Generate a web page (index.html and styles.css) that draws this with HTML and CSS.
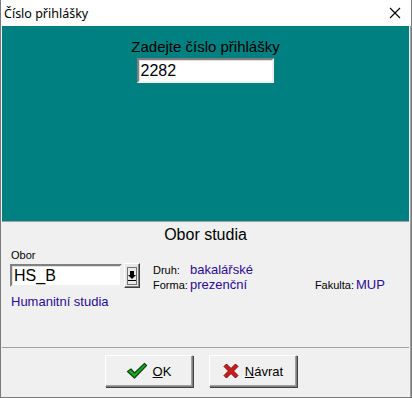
FILE: index.html
```html
<!DOCTYPE html>
<html lang="cs">

<head>
    <meta charset="UTF-8">
    <title>Číslo přihlášky</title>
    <link rel="stylesheet" href="styles.css">
</head>

<body>
    <div class="window">
        <div class="titlebar">
            <span class="title">Číslo přihlášky</span>
            <svg class="close" width="12" height="12" viewBox="0 0 12 12">
                <path d="M1 1 L11 11 M11 1 L1 11" stroke="#000" stroke-width="1.1" fill="none" />
            </svg>
        </div>

        <div class="client">
            <div class="entry">
                <div class="entry-label">Zadejte číslo přihlášky</div>
                <div class="sunken entry-input">2282</div>
            </div>

            <div class="study">
                <div class="study-title">Obor studia</div>
                <div class="study-row">
                    <div class="field">
                        <div class="small-label">Obor</div>
                        <div class="combo">
                            <div class="sunken obor-input">HS_B</div>
                            <div class="pick">
                                <svg width="12" height="20" viewBox="0 0 12 20">
                                    <rect x="1.5" y="1.5" width="9" height="17" fill="none" stroke="#000" stroke-dasharray="1 1" />
                                    <path d="M4 5 H8 V9 H10 L6 13 L2 9 H4 Z" fill="#000" />
                                    <path d="M2 14.5 H10" stroke="#000" />
                                </svg>
                            </div>
                        </div>
                        <div class="value name">Humanitní studia</div>
                    </div>
                    <div class="facts">
                        <div class="fact"><span class="key">Druh:</span><span class="value">bakalářské</span></div>
                        <div class="fact"><span class="key">Forma:</span><span class="value">prezenční</span></div>
                    </div>
                    <div class="fact faculty"><span class="key">Fakulta:</span><span class="value">MUP</span></div>
                </div>
            </div>

            <div class="buttons">
                <button class="btn">
                    <svg width="22" height="18" viewBox="0 0 22 18">
                        <path d="M1.5 9.5 L5 7 L8.5 11 L18.5 1.5 L20.5 3.5 L8.5 16 Z" fill="#22a62a" stroke="#0b4a12" stroke-width="1.2" stroke-linejoin="round" />
                    </svg>
                    <span><u>O</u>K</span>
                </button>
                <button class="btn">
                    <svg width="18" height="18" viewBox="0 0 18 18">
                        <path d="M2 4.5 L4.5 2 L9 6.5 L13.5 2 L16 4.5 L11.5 9 L16 13.5 L13.5 16 L9 11.5 L4.5 16 L2 13.5 L6.5 9 Z" fill="#d0191b" stroke="#7a0d0e" stroke-width="1" stroke-linejoin="round" />
                    </svg>
                    <span><u>N</u>ávrat</span>
                </button>
            </div>
        </div>
    </div>
</body>

</html>
```

FILE: styles.css
```css
body {
    margin: 0;
    padding: 0;
    font-family: 'Liberation Sans', Arial, sans-serif;
    background: #f0f0f0;
}

.window {
    width: 412px;
    height: 398px;
    box-sizing: border-box;
    border: 1px solid #7a7a7a;
    border-top: 0;
    display: flex;
    flex-direction: column;
    background: #f0f0f0;
}

.titlebar {
    height: 26px;
    background: white;
    display: flex;
    align-items: center;
    justify-content: space-between;
    padding: 0 10px 0 3px;
    flex-shrink: 0;
}

.title {
    font-family: 'Noto Sans', sans-serif;
    font-size: 12.5px;
    color: #000;
}

.client {
    flex: 1;
    display: flex;
    flex-direction: column;
    padding: 0 1px 0 1px;
    border-right: 1px solid #a0a0a0;
}

.entry {
    height: 195px;
    background: #008080;
    display: flex;
    flex-direction: column;
    align-items: center;
    padding-top: 11px;
    box-sizing: border-box;
    flex-shrink: 0;
}

.entry-label {
    font-size: 15px;
    color: #000;
    line-height: 20px;
}

.sunken {
    background: white;
    border: 2px solid;
    border-color: #808080 #f0f0f0 #f0f0f0 #808080;
    box-shadow: inset 1px 1px 0 #e0e0e0;
    box-sizing: border-box;
    color: #000;
}

.entry-input {
    width: 137px;
    height: 25px;
    font-size: 16px;
    line-height: 21px;
    padding-left: 2px;
    margin-left: -1px;
    margin-top: 1px;
}

.study {
    border-top: 1px solid #a0a0a0;
    padding: 3px 8px 0 8px;
    height: 126px;
    box-sizing: border-box;
    flex-shrink: 0;
}

.study-title {
    text-align: center;
    font-size: 16px;
    line-height: 20px;
    color: #000;
}

.study-row {
    display: flex;
    align-items: flex-start;
    margin-top: 4px;
}

.small-label {
    font-size: 11px;
    line-height: 13px;
    color: #000;
    margin-left: 1px;
}

.combo {
    display: flex;
    align-items: center;
    gap: 2px;
    margin-top: 1px;
}

.obor-input {
    width: 112px;
    height: 23px;
    font-size: 16px;
    line-height: 19px;
    padding-left: 2px;
}

.pick {
    width: 16px;
    height: 25px;
    box-sizing: border-box;
    border: 1px solid;
    border-color: #fff #404040 #404040 #fff;
    box-shadow: inset -1px -1px 0 #808080;
    background: #e8e8e8;
    display: flex;
    align-items: center;
    justify-content: center;
}

.value {
    color: #2c0a96;
}

.name {
    font-size: 13px;
    margin-top: 6px;
    margin-left: 1px;
}

.facts {
    margin-left: 13px;
    margin-top: 13px;
}

.fact {
    font-size: 11px;
    height: 15px;
    line-height: 15px;
    display: flex;
    align-items: baseline;
}

.fact .key {
    width: 37px;
    color: #000;
}

.fact .value {
    font-size: 13px;
    line-height: 15px;
}

.faculty {
    margin-left: 62px;
    margin-top: 28px;
}

.faculty .key {
    width: auto;
    margin-right: 2px;
}

.buttons {
    border-top: 1px solid #a0a0a0;
    flex: 1;
    display: flex;
    justify-content: center;
    gap: 16px;
    padding: 7px 10px 0 0;
}

.btn {
    width: 88px;
    height: 32px;
    box-sizing: border-box;
    background: #f0f0f0;
    border: 1px solid;
    border-color: #fff #808080 #808080 #fff;
    box-shadow: inset -1px -1px 0 #a0a0a0, 1px 1px 0 #404040;
    font-family: 'Liberation Sans', Arial, sans-serif;
    font-size: 13px;
    color: #000;
    display: flex;
    align-items: center;
    justify-content: center;
    gap: 5px;
    padding: 0;
}
```
